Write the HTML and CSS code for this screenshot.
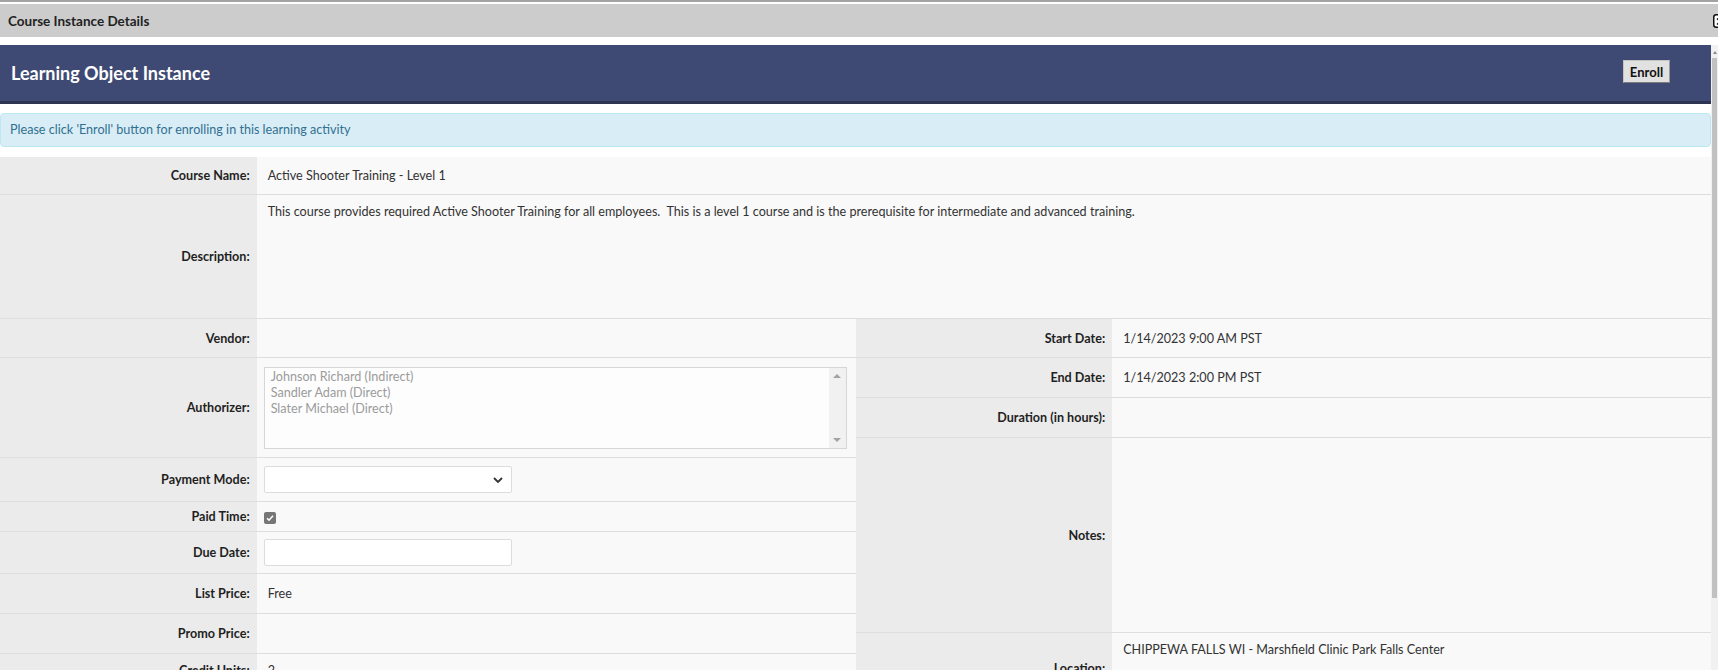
FILE: index.html
```html
<!DOCTYPE html>
<html lang="en">
<head>
    <meta charset="UTF-8">
    <title>Course Instance Details</title>
    <link rel="stylesheet" href="styles.css">
</head>
<body>
    <div class="topline"></div>
    <div class="titlebar">
        <span class="titlebar-text">Course Instance Details</span>
        <svg class="titlebar-icon" width="14" height="14" viewBox="0 0 14 14">
            <rect x="0.75" y="0.75" width="12.5" height="12.5" rx="2.5" fill="#fff" stroke="#111" stroke-width="1.5"/>
            <path d="M4 4.5 L10 10.5 M10 4.5 L4 10.5" stroke="#111" stroke-width="1.5"/>
        </svg>
    </div>

    <div class="frame">
        <div class="content">
            <div class="page-header">
                <h1>Learning Object Instance</h1>
                <button class="btn-enroll">Enroll</button>
            </div>

            <div class="alert">Please click 'Enroll' button for enrolling in this learning activity</div>

            <div class="details">
                <div class="row row-name">
                    <div class="label">Course Name:</div>
                    <div class="value">Active Shooter Training - Level 1</div>
                </div>
                <div class="row row-desc">
                    <div class="label">Description:</div>
                    <div class="value value-top">This course provides required Active Shooter Training for all employees.&nbsp; This is a level 1 course and is the prerequisite for intermediate and advanced training.</div>
                </div>

                <div class="halves">
                    <div class="half">
                        <div class="row">
                            <div class="label">Vendor:</div>
                            <div class="value"></div>
                        </div>
                        <div class="row row-auth">
                            <div class="label">Authorizer:</div>
                            <div class="value field">
                                <div class="listbox">
                                    <div class="listbox-items">
                                        <div>Johnson Richard (Indirect)</div>
                                        <div>Sandler Adam (Direct)</div>
                                        <div>Slater Michael (Direct)</div>
                                    </div>
                                    <div class="listbox-scroll">
                                        <span class="arrow-up"></span>
                                        <span class="arrow-down"></span>
                                    </div>
                                </div>
                            </div>
                        </div>
                        <div class="row row-select">
                            <div class="label">Payment Mode:</div>
                            <div class="value field">
                                <div class="select">
                                    <select></select>
                                    <svg class="select-caret" width="10" height="6" viewBox="0 0 10 6">
                                        <path d="M1 1 L5 5 L9 1" fill="none" stroke="#333" stroke-width="1.8"/>
                                    </svg>
                                </div>
                            </div>
                        </div>
                        <div class="row row-check">
                            <div class="label">Paid Time:</div>
                            <div class="value field">
                                <span class="checkbox">
                                    <svg width="12" height="12" viewBox="0 0 12 12">
                                        <path d="M3 6.2 L5 8.2 L9 3.8" fill="none" stroke="#fff" stroke-width="1.6"/>
                                    </svg>
                                </span>
                            </div>
                        </div>
                        <div class="row row-input">
                            <div class="label">Due Date:</div>
                            <div class="value field">
                                <input class="text-input" type="text">
                            </div>
                        </div>
                        <div class="row">
                            <div class="label">List Price:</div>
                            <div class="value">Free</div>
                        </div>
                        <div class="row">
                            <div class="label">Promo Price:</div>
                            <div class="value"></div>
                        </div>
                        <div class="row row-credit">
                            <div class="label">Credit Units:</div>
                            <div class="value">2</div>
                        </div>
                    </div>

                    <div class="half">
                        <div class="row">
                            <div class="label">Start Date:</div>
                            <div class="value">1/14/2023 9:00 AM PST</div>
                        </div>
                        <div class="row">
                            <div class="label">End Date:</div>
                            <div class="value">1/14/2023 2:00 PM PST</div>
                        </div>
                        <div class="row">
                            <div class="label">Duration (in hours):</div>
                            <div class="value"></div>
                        </div>
                        <div class="row row-notes">
                            <div class="label">Notes:</div>
                            <div class="value"></div>
                        </div>
                        <div class="row row-loc">
                            <div class="label">Location:</div>
                            <div class="value value-top">CHIPPEWA FALLS WI - Marshfield Clinic Park Falls Center</div>
                        </div>
                    </div>
                </div>
            </div>
        </div>

        <div class="scrollbar">
            <span class="scroll-arrow"></span>
            <div class="scroll-thumb"></div>
        </div>
    </div>
</body>
</html>
```

FILE: styles.css
```css
body {
    margin: 0;
    height: 670px;
    overflow: hidden;
    font-family: Lato, "Open Sans", sans-serif;
    font-size: 12.6px;
    color: #333;
    background: #fff;
}

.topline {
    height: 2px;
    background: #a3a3a3;
    margin-bottom: 2px;
}

.titlebar {
    height: 33px;
    background: #ccc;
    display: flex;
    align-items: center;
    padding-left: 8px;
    overflow: hidden;
}

.titlebar-text {
    font-size: 13.5px;
    font-weight: bold;
    color: #222;
}

.titlebar-icon {
    flex: none;
    margin-left: auto;
    margin-right: -9px;
}

.frame {
    display: flex;
    margin-top: 8px;
    height: 625px;
}

.content {
    flex: 1;
    min-width: 0;
    overflow: hidden;
}

/* header */
.page-header {
    height: 56px;
    background: #3e4a73;
    border-bottom: 3px solid #2d3452;
    display: flex;
    align-items: center;
    justify-content: space-between;
    padding: 0 41px 0 11px;
}

.page-header h1 {
    margin: 0;
    font-size: 18px;
    font-weight: bold;
    color: #fff;
}

.btn-enroll {
    height: 23px;
    width: 47px;
    padding: 0;
    margin-top: -3px;
    font-family: inherit;
    font-size: 13px;
    font-weight: bold;
    color: #111;
    background: #e1e1e1;
    border: 1px solid #c4c4c4;
    border-right-color: #9a9a9a;
    border-bottom-color: #7c7c7c;
}

.alert {
    margin: 9px 0 10px;
    padding: 9px;
    line-height: 14px;
    background: #d9edf7;
    border: 1px solid #bce8f1;
    border-radius: 4px;
    color: #31708f;
}

/* detail rows */
.row {
    display: flex;
    height: 40px;
    box-sizing: border-box;
    border-bottom: 1px solid #dedede;
}

.label {
    width: 15%;
    flex: none;
    box-sizing: border-box;
    padding-right: 7px;
    background: #ebebeb;
    display: flex;
    align-items: center;
    justify-content: flex-end;
    font-weight: bold;
    color: #1f1f1f;
}

.half .label {
    width: 30%;
}

.value {
    flex: 1;
    min-width: 0;
    padding: 0 9px 0 11px;
    background: #f9f9f9;
    display: flex;
    align-items: center;
}

.value.field {
    padding-left: 7px;
}

.value-top {
    align-items: flex-start;
    padding-top: 9px;
    line-height: 16px;
}

.half .row:first-child { height: 39px; }
.row-name { height: 38px; }
.row-desc { height: 124px; }
.row-auth { height: 100px; }
.row-select { height: 44px; }
.row-check { height: 30px; }
.row-input { height: 42px; }
.row-credit { height: 34px; }
.row-notes { height: 195px; }
.row-loc { height: 72px; }

.halves {
    display: flex;
}

.half {
    width: 50%;
}

/* form controls */
.listbox {
    flex: 1;
    height: 82px;
    box-sizing: border-box;
    display: flex;
    border: 1px solid #d6d6d6;
    background: #fdfdfd;
}

.listbox-items {
    flex: 1;
    padding: 1px 6px;
    line-height: 16px;
    color: #9b9b9b;
}

.listbox-scroll {
    width: 17px;
    background: #f1f1f1;
    display: flex;
    flex-direction: column;
    justify-content: space-between;
    align-items: center;
    padding: 6px 0;
}

.arrow-up,
.arrow-down {
    width: 0;
    height: 0;
    border-left: 4px solid transparent;
    border-right: 4px solid transparent;
}

.arrow-up {
    border-bottom: 4px solid #a3a3a3;
}

.arrow-down {
    border-top: 4px solid #a3a3a3;
}

.select {
    position: relative;
    width: 248px;
    height: 27px;
}

.select select {
    appearance: none;
    width: 100%;
    height: 100%;
    margin: 0;
    background: #fff;
    border: 1px solid #dcdcdc;
    border-radius: 2px;
}

.select-caret {
    position: absolute;
    right: 9px;
    top: 11px;
}

.checkbox {
    width: 12px;
    height: 12px;
    margin-top: 2px;
    border-radius: 2px;
    background: #767676;
    display: flex;
}

.text-input {
    width: 248px;
    height: 27px;
    box-sizing: border-box;
    margin: 0;
    background: #fff;
    border: 1px solid #dcdcdc;
    border-radius: 2px;
}

/* page scrollbar */
.scrollbar {
    width: 7px;
    background: #f1f1f1;
    display: flex;
    flex-direction: column;
    align-items: center;
}

.scroll-arrow {
    margin-top: 6px;
    width: 0;
    height: 0;
    border-left: 2px solid transparent;
    border-right: 2px solid transparent;
    border-bottom: 3px solid #8a8a8a;
}

.scroll-thumb {
    margin-top: 4px;
    width: 5px;
    height: 540px;
    background: #c1c1c1;
}
```
